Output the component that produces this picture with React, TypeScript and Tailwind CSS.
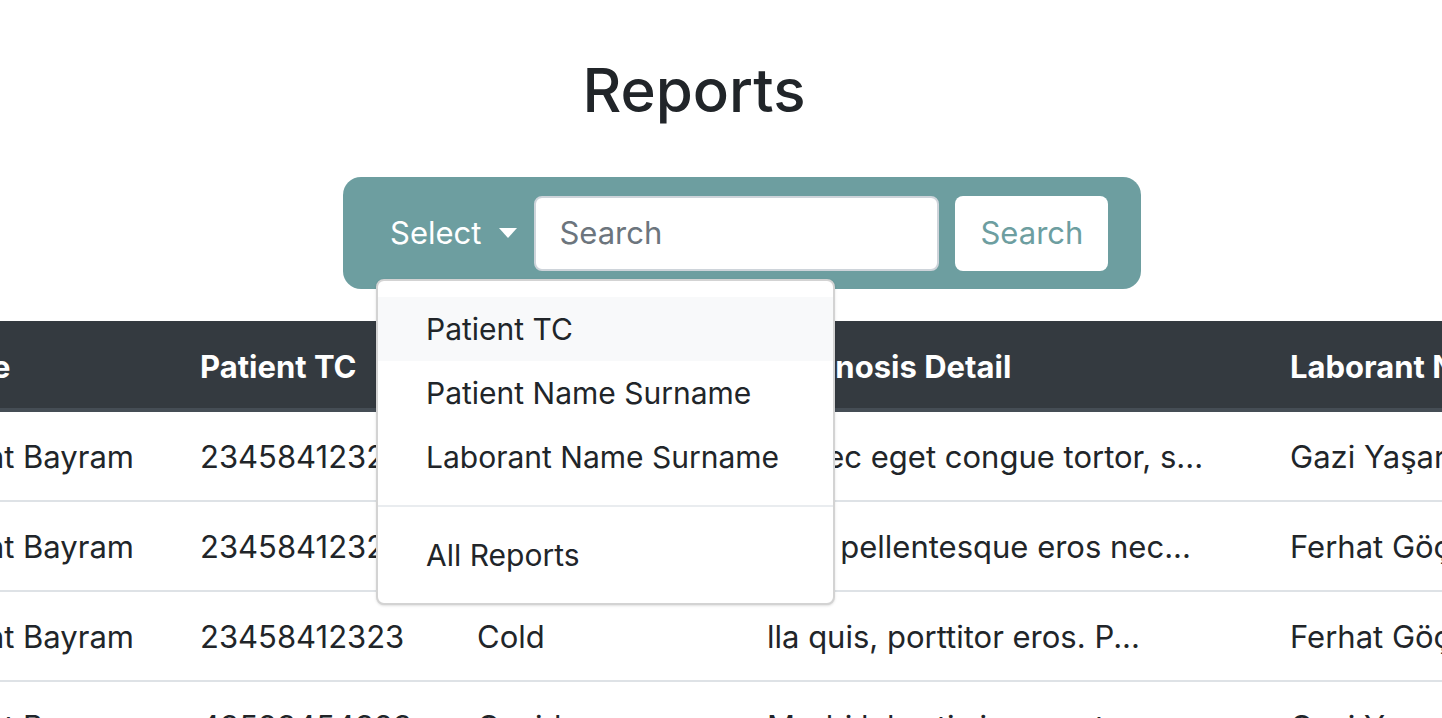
const rows = [
  ["Levent Bayram", "23458412323", "Flu", "Donec eget congue tortor, s...", "Gazi Yaşar Öztürk"],
  ["Levent Bayram", "23458412323", "Fever", "Duis pellentesque eros nec...", "Ferhat Göçmen"],
  ["Levent Bayram", "23458412323", "Cold", "lla quis, porttitor eros. P...", "Ferhat Göçmen"],
  ["Levent Bayram", "43523454323", "Covid", "Morbi lobortis ipsum et ma...", "Gazi Yaşar Öztürk"],
];

const headers = ["Name", "Patient TC", "Diagnosis", "Diagnosis Detail", "Laborant Name Surname"];

const grid = "grid grid-cols-[278px_277px_290px_523px_520px]";

export default function App() {
  return (
    <div className="w-full h-[718px] overflow-hidden bg-white text-[#212529] font-['Inter',sans-serif]">
      {/* title */}
      <h2 className="pt-[53px] pr-[54px] text-center text-[60px] leading-[74px] font-medium">Reports</h2>

      {/* search bar */}
      <div className="mt-[50px] flex justify-center pl-[42px]">
        <div className="relative flex items-center w-[798px] h-[112px] rounded-[18px] bg-[#6d9ea0] pl-[47px] pr-[32px]">
          <button className="flex items-center gap-[18px] text-white text-[31px] mr-[17px]">
            Select
            <span className="w-0 h-0 border-t-[10px] border-t-white border-x-[9px] border-x-transparent" />
          </button>
          <div className="flex items-center w-[405px] h-[75px] rounded-[8px] border-2 border-[#ced4da] bg-white px-[23px] text-[31px] text-[#6c757d]">
            Search
          </div>
          <button className="ml-[16px] w-[153px] h-[75px] rounded-[8px] bg-white text-[31px] text-[#6d9ea0]">
            Search
          </button>

          {/* open dropdown */}
          <div className="absolute left-[33px] top-[102px] z-10 w-[459px] rounded-[8px] border-2 border-[#d3d3d3] bg-white py-[16px] shadow-sm text-[30px] text-[#212529] whitespace-nowrap">
            <div className="h-[64px] flex items-center px-[48px] bg-[#f8f9fa]">Patient TC</div>
            <div className="h-[64px] flex items-center px-[48px]">Patient Name Surname</div>
            <div className="h-[64px] flex items-center px-[48px]">Laborant Name Surname</div>
            <div className="my-[16px] h-[2px] bg-[#e9ecef]" />
            <div className="h-[64px] flex items-center px-[48px]">All Reports</div>
          </div>
        </div>
      </div>

      {/* table */}
      <div className="mt-[32px] ml-[-108px] w-[1900px] text-[31px]">
        <div className={`${grid} h-[91px] pt-[6px] bg-[#343a40] border-b-4 border-[#454d55] text-white font-bold`}>
          {headers.map((h) => (
            <div key={h} className="pl-[30px] flex items-center whitespace-nowrap">{h}</div>
          ))}
        </div>
        {rows.map((r, i) => (
          <div key={i} className={`${grid} h-[90px] pt-[3px] border-b-2 border-[#dee2e6]`}>
            {r.map((c, j) => (
              <div key={j} className={`${j === 0 ? "px-[24px]" : "pl-[30px]"} flex items-center whitespace-nowrap`}>{c}</div>
            ))}
          </div>
        ))}
      </div>
    </div>
  );
}
